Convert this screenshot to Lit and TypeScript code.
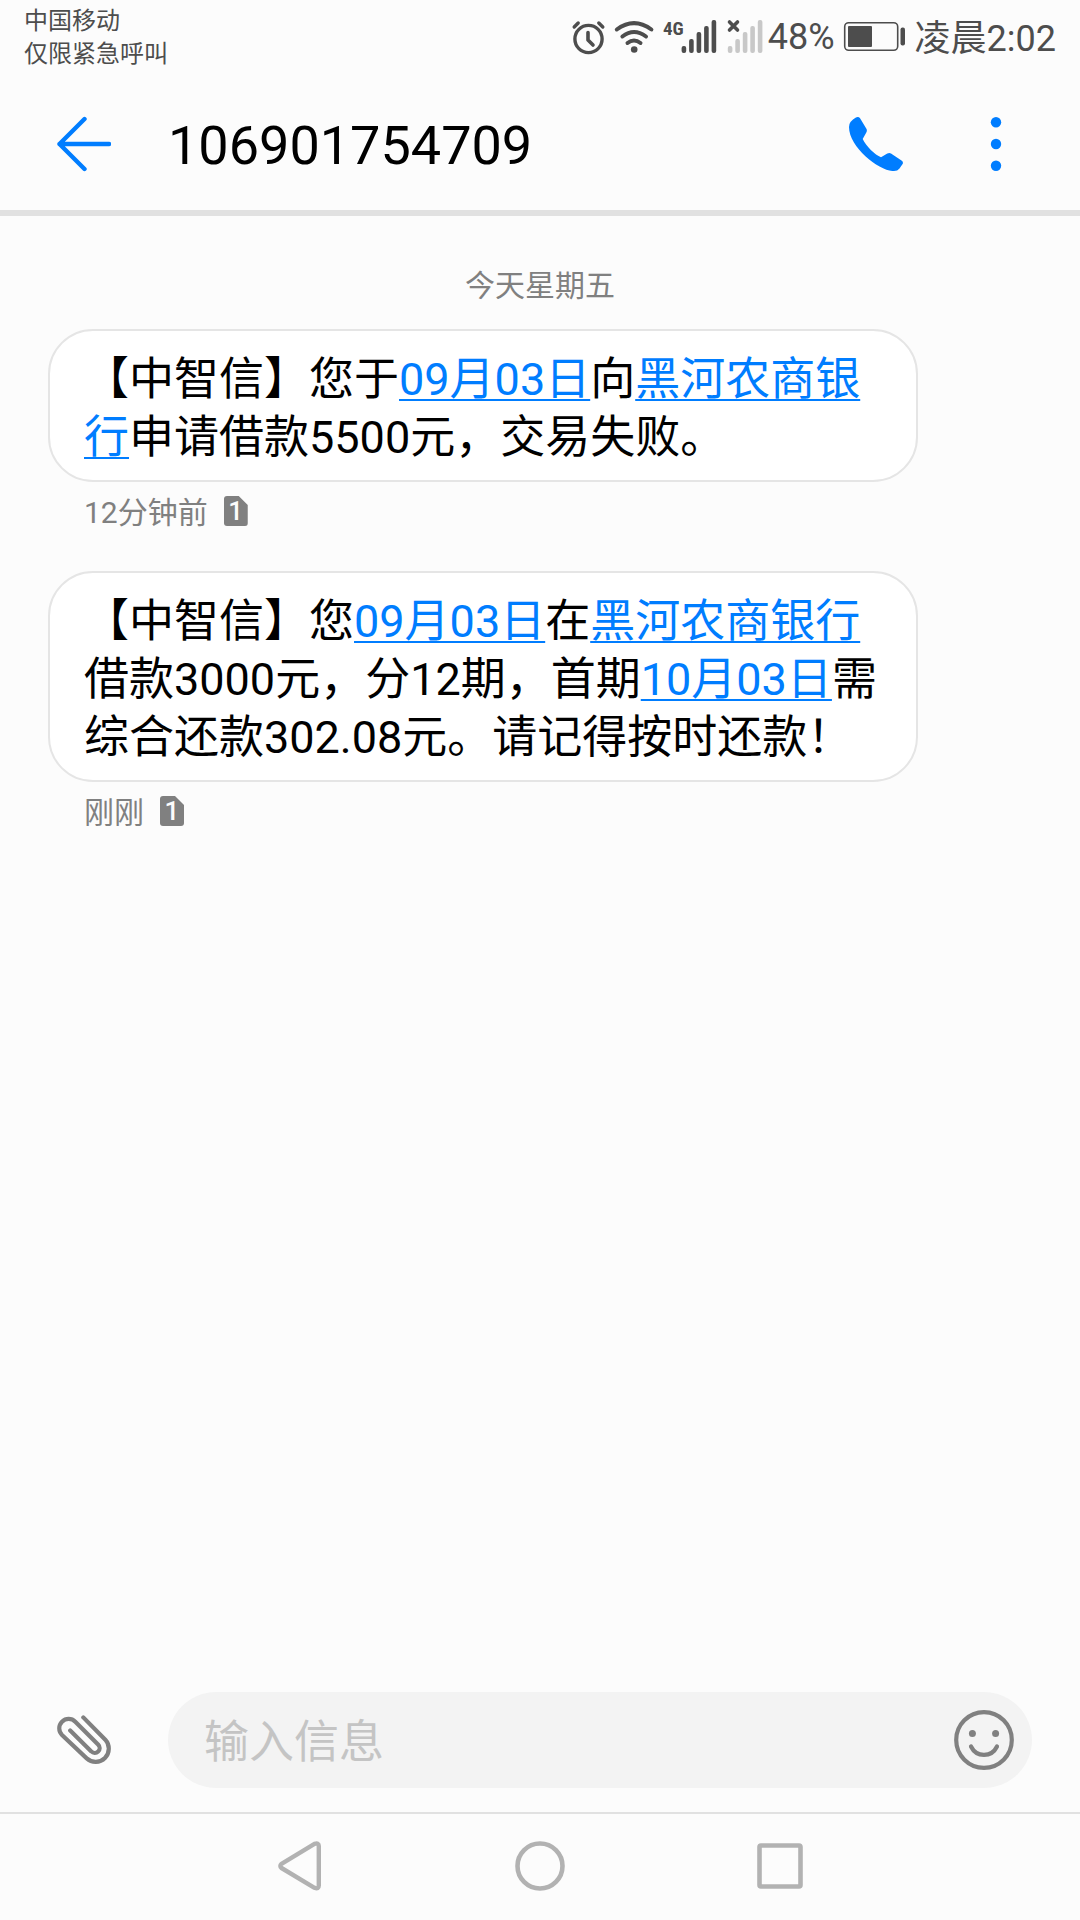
import { LitElement, html, css, svg } from "lit";
import { customElement, property } from "lit/decorators.js";

type Segment = { text: string; link?: boolean };
type Message = { id: number; body: Segment[]; time: string; sim: string };

const MESSAGES: Message[] = [
  {
    id: 1,
    body: [
      { text: "【中智信】您于" },
      { text: "09月03日", link: true },
      { text: "向" },
      { text: "黑河农商银行", link: true },
      { text: "申请借款5500元，交易失败。" },
    ],
    time: "12分钟前",
    sim: "1",
  },
  {
    id: 2,
    body: [
      { text: "【中智信】您" },
      { text: "09月03日", link: true },
      { text: "在" },
      { text: "黑河农商银行", link: true },
      { text: "借款3000元，分12期，首期" },
      { text: "10月03日", link: true },
      { text: "需综合还款302.08元。请记得按时还款！" },
    ],
    time: "刚刚",
    sim: "1",
  },
];

/* Five rounded signal bars; x is the left edge of the first one. */
const signalBars = (x: number) =>
  [7, 14, 21, 27, 33].map(
    (h, i) => svg`<rect x=${x + i * 7.5} y=${34 - h} width="4.6" height=${h} rx="2"></rect>`
  );

@customElement("status-bar")
export class StatusBar extends LitElement {
  static styles = css`
    :host {
      display: flex;
      justify-content: space-between;
      align-items: flex-start;
      height: 72px;
      padding: 0 24px;
      color: #4d4d4d;
    }
    .carriers {
      padding-top: 5px;
      font-size: 24px;
      line-height: 33px;
    }
    .icons {
      display: flex;
      align-items: center;
      gap: 8px;
      padding-top: 10px;
      font-size: 36px;
      line-height: 48px;
      white-space: nowrap;
    }
    .charge {
      display: flex;
      align-items: center;
      gap: 4px;
    }
    .clock {
      padding-top: 5px;
    }
    svg {
      display: block;
      flex: none;
      overflow: visible;
    }
    .network {
      font-family: "Roboto Condensed", "Liberation Sans Narrow", Roboto, sans-serif;
      font-size: 19px;
      font-weight: 700;
    }
    .faded {
      fill: #c8c8c8;
    }
  `;

  render() {
    return html`
      <div class="carriers">
        <div>中国移动</div>
        <div>仅限紧急呼叫</div>
      </div>
      <div class="icons">
        <svg width="36" height="36" viewBox="0 0 36 36" fill="none" stroke="currentColor" stroke-linecap="round" aria-hidden="true">
          <circle cx="18.5" cy="20" r="13.6" stroke-width="3.4"></circle>
          <path d="M18 13.5v7.5l5 5" stroke-width="3.6" stroke-linejoin="round"></path>
          <path d="M4.2 8 8.2 4M28.8 4l4 4" stroke-width="3.4"></path>
        </svg>
        <svg width="40" height="36" viewBox="0 0 40 36" fill="none" stroke="currentColor" stroke-width="4" stroke-linecap="round" aria-hidden="true">
          <path d="M2.8 10.5Q20 -2.2 37.4 10.5M8.4 17.5Q20 8.5 32 17.5M13.5 24Q20 19 26.5 24"></path>
          <circle cx="20.2" cy="30.5" r="3.3" fill="currentColor" stroke="none"></circle>
        </svg>
        <svg width="56" height="36" viewBox="0 0 56 36" fill="currentColor" aria-hidden="true">
          <text class="network" x="1" y="16">4G</text>
          ${signalBars(19.6)}
        </svg>
        <div class="charge">
          <svg width="38" height="36" viewBox="0 0 38 36" fill="currentColor" aria-hidden="true">
            <g class="faded">${signalBars(1.8)}</g>
            <path d="M3.5 3l8 8M11.5 3l-8 8" stroke="currentColor" stroke-width="3.6" stroke-linecap="round"></path>
          </svg>
          <span>48%</span>
        </div>
        <svg width="64" height="36" viewBox="0 0 64 36" fill="currentColor" aria-hidden="true">
          <rect x="1.7" y="3.7" width="53" height="27.6" rx="4" fill="none" stroke="currentColor" stroke-width="1.6"></rect>
          <rect x="5" y="7" width="24" height="21" rx="1"></rect>
          <rect x="57.5" y="8.5" width="4.5" height="18" rx="2"></rect>
        </svg>
        <span class="clock">凌晨2:02</span>
      </div>
    `;
  }
}

@customElement("conversation-header")
export class ConversationHeader extends LitElement {
  @property() number = "";

  static styles = css`
    :host {
      display: flex;
      align-items: center;
      gap: 48px;
      height: 132px;
      padding: 6px 48px 0;
      border-bottom: 6px solid #e1e1e1;
      color: #000;
    }
    h1 {
      flex: 1;
      min-width: 0;
      margin: 0;
      padding-top: 4px;
      font-size: 54px;
      font-weight: 400;
      line-height: 72px;
    }
    button {
      display: grid;
      place-items: center;
      flex: none;
      width: 72px;
      height: 72px;
      padding: 0;
      border: 0;
      background: none;
      color: #007dff;
    }
  `;

  render() {
    return html`
      <button type="button" aria-label="返回">
        <svg width="54" height="56" viewBox="0 0 54 56" fill="none" stroke="currentColor" stroke-width="4.4" stroke-linecap="round" stroke-linejoin="round">
          <path d="M27.5 3 2.5 28l25 25M2.5 28H52"></path>
        </svg>
      </button>
      <h1>${this.number}</h1>
      <button type="button" aria-label="拨打电话">
        <svg width="54" height="54" viewBox="0 0 54 54" fill="currentColor">
          <path d="M1.5 5Q4 2 6.5 .7Q9.5 -1 11.2 1.5L17.4 11.8Q18.4 13.6 17.3 15.4L13.7 22C17 29 26 38 32 40.2L38.3 36.6Q40.3 35.4 42 36.5L52.5 43.4Q54.7 45 53.6 47L50.5 51.5Q48.5 54 45 54C32 55 0 31 0 10Q0 7 1.5 5Z"></path>
        </svg>
      </button>
      <button type="button" aria-label="更多选项">
        <svg width="12" height="54" viewBox="0 0 12 54" fill="currentColor">
          <circle cx="6" cy="5.3" r="5.2"></circle>
          <circle cx="6" cy="27" r="5.2"></circle>
          <circle cx="6" cy="48.7" r="5.2"></circle>
        </svg>
      </button>
    `;
  }
}

@customElement("message-item")
export class MessageItem extends LitElement {
  @property({ attribute: false }) message!: Message;

  static styles = css`
    :host {
      display: block;
    }
    .bubble {
      box-sizing: border-box;
      margin: 0;
      padding: 20px 34px 13px;
      border: 2px solid #e5e5e5;
      border-radius: 45px;
      background: #fff;
      color: #000;
      font-size: 45px;
      line-height: 58px;
    }
    a {
      color: #007dff;
      text-decoration: underline 2px;
      text-underline-offset: 4px;
      text-decoration-skip-ink: none;
    }
    .meta {
      display: flex;
      align-items: flex-start;
      gap: 16px;
      padding: 11px 36px 0;
      color: #808080;
      font-size: 30px;
      line-height: 40px;
    }
    .sim {
      width: 24px;
      height: 30px;
      margin-top: 3px;
      border-radius: 3px;
      background: #808080;
      clip-path: polygon(0 0, 15px 0, 24px 9px, 24px 100%, 0 100%);
      color: #fcfcfc;
      font-size: 26px;
      font-weight: 500;
      line-height: 30px;
      text-align: center;
    }
  `;

  render() {
    const { body, time, sim } = this.message;
    return html`
      <p class="bubble">${body.map((s) => (s.link ? html`<a href="#">${s.text}</a>` : s.text))}</p>
      <div class="meta"><span>${time}</span><span class="sim">${sim}</span></div>
    `;
  }
}

@customElement("compose-bar")
export class ComposeBar extends LitElement {
  static styles = css`
    :host {
      display: flex;
      align-items: center;
      gap: 48px;
      padding: 24px 48px;
      color: #808080;
    }
    button {
      display: grid;
      place-items: center;
      flex: none;
      width: 72px;
      height: 72px;
      padding: 0;
      border: 0;
      background: none;
      color: inherit;
    }
    .field {
      display: flex;
      align-items: center;
      flex: 1;
      min-width: 0;
      height: 96px;
      padding: 0 12px 0 36px;
      border-radius: 48px;
      background: #f3f3f3;
      box-sizing: border-box;
    }
    input {
      flex: 1;
      min-width: 0;
      height: 72px;
      padding: 4px 0 0;
      border: 0;
      outline: 0;
      background: none;
      color: #000;
      font: inherit;
      font-size: 45px;
    }
    input::placeholder {
      color: #c4c4c4;
      opacity: 1;
    }
  `;

  render() {
    return html`
      <button type="button" aria-label="添加附件">
        <svg width="54" height="50" viewBox="0 0 54 50" fill="none" stroke="currentColor" stroke-width="4.2" stroke-linecap="round" stroke-linejoin="round">
          <path d="M26.3 2.4 48.3 24.7A13.2 13.2 0 0 1 29.7 43.4L5 20A9.4 9.4 0 0 1 18.3 6.7L41.3 29.7A4.7 4.7 0 0 1 34.3 36.4L13.2 15.4"></path>
        </svg>
      </button>
      <div class="field">
        <input type="text" placeholder="输入信息" aria-label="输入信息" />
        <button type="button" aria-label="表情">
          <svg width="60" height="60" viewBox="0 0 60 60" fill="none" stroke="currentColor" stroke-width="4.2" stroke-linecap="round">
            <circle cx="30" cy="30" r="27.8"></circle>
            <path d="M17 36.5C22.5 47.7 37.5 47.7 43 36.5"></path>
            <g fill="currentColor" stroke="none">
              <circle cx="18.4" cy="23.5" r="3.5"></circle>
              <circle cx="41.6" cy="23.5" r="3.5"></circle>
            </g>
          </svg>
        </button>
      </div>
    `;
  }
}

@customElement("system-nav")
export class SystemNav extends LitElement {
  static styles = css`
    :host {
      display: flex;
      justify-content: center;
      align-items: center;
      gap: 144px;
      height: 104px;
      padding-bottom: 2px;
      border-top: 2px solid #e1e1e1;
      color: #b2b2b2;
    }
    button {
      display: grid;
      place-items: center;
      width: 96px;
      height: 96px;
      padding: 0;
      border: 0;
      background: none;
      color: inherit;
    }
  `;

  render() {
    return html`
      <button type="button" aria-label="后退">
        <svg width="44" height="50" viewBox="0 0 44 50" fill="none" stroke="currentColor" stroke-width="4.4" stroke-linejoin="round">
          <path d="M3.5 22.8 36.5 2.9Q40.8 1.3 40.8 5V44.5Q40.8 48.5 36.5 46.8L3.5 27Q1.2 25 3.5 22.8Z"></path>
        </svg>
      </button>
      <button type="button" aria-label="主屏幕">
        <svg width="50" height="50" viewBox="0 0 50 50" fill="none" stroke="currentColor" stroke-width="4.6">
          <circle cx="25" cy="25" r="22.5"></circle>
        </svg>
      </button>
      <button type="button" aria-label="最近任务">
        <svg width="46" height="46" viewBox="0 0 46 46" fill="none" stroke="currentColor" stroke-width="4.6">
          <rect x="2.5" y="2.5" width="41" height="41" rx="1.5"></rect>
        </svg>
      </button>
    `;
  }
}

@customElement("app-root")
export class AppRoot extends LitElement {
  static styles = css`
    :host {
      display: flex;
      flex-direction: column;
      min-height: 100vh;
      background: #fcfcfc;
      font-family: Roboto, "Noto Sans CJK SC", sans-serif;
    }
    main {
      display: flex;
      flex-direction: column;
      flex: 1;
      padding: 50px 0 0;
    }
    .day {
      margin: 0 0 23px;
      color: #808080;
      font-size: 30px;
      line-height: 40px;
      text-align: center;
    }
    .thread {
      display: flex;
      flex-direction: column;
      gap: 38px;
      margin: 0;
      padding: 0 162px 0 48px;
      list-style: none;
    }
  `;

  render() {
    return html`
      <status-bar></status-bar>
      <conversation-header number="106901754709"></conversation-header>
      <main lang="zh-CN">
        <p class="day">今天星期五</p>
        <ul class="thread">
          ${MESSAGES.map((m) => html`<li><message-item .message=${m}></message-item></li>`)}
        </ul>
      </main>
      <compose-bar></compose-bar>
      <system-nav></system-nav>
    `;
  }
}
